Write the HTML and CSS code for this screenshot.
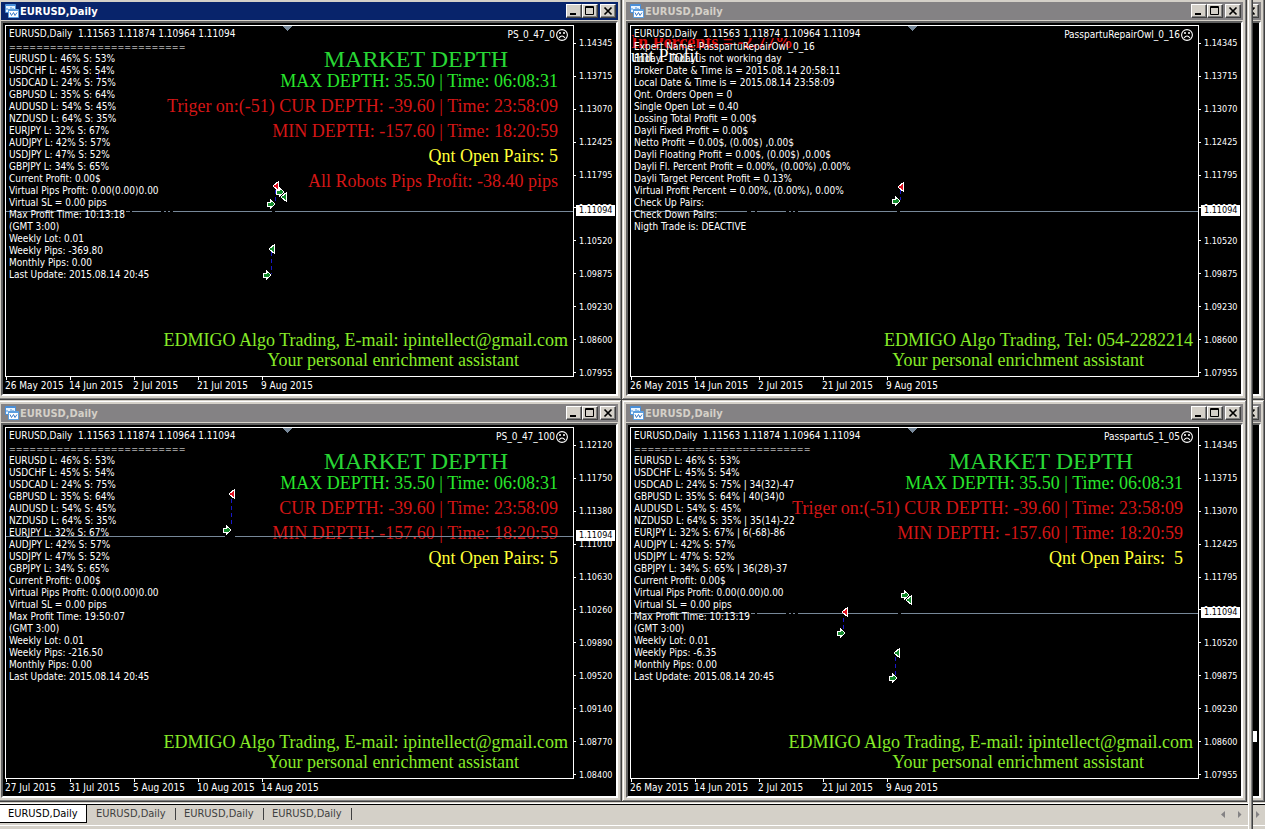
FILE: index.html
```html
<!DOCTYPE html>
<html lang="en">
<head>
<meta charset="utf-8">
<title>EURUSD,Daily</title>
<link rel="stylesheet" href="styles.css">
</head>
<body>
<svg class="defs" aria-hidden="true">
  <symbol id="chart-icon" viewBox="0 0 14 14">
    <rect x="0" y="0" width="11" height="9" rx="1" fill="#4a8fd8"/>
    <rect x="1" y="2" width="9" height="6" fill="#e8f4ff"/>
    <path d="M2 6V4M4 7V5M6 5V3M8 6V4" stroke="#4a8fd8"/>
    <rect x="3" y="5" width="11" height="9" rx="1" fill="#5c9fe0"/>
    <rect x="4" y="7" width="9" height="6" fill="#fff"/>
    <path d="M5 8.500l1.500 3 2-3 1.500 3 2-3" stroke="#3c7cc8" fill="none"/>
  </symbol>
  <symbol id="min" viewBox="0 0 12 10"><path d="M2 8h6" stroke="#000" stroke-width="2"/></symbol>
  <symbol id="max" viewBox="0 0 12 10"><path d="M1.500 .5h8v8h-8zM1 1.500h9" stroke="#000" fill="none"/></symbol>
  <symbol id="close" viewBox="0 0 12 10"><path d="M2.500 1.500l7 7M9.500 1.500l-7 7" stroke="#000" stroke-width="1.700"/></symbol>
  <symbol id="sad" viewBox="0 0 12 12">
    <circle cx="6" cy="6" r="5.400" fill="none" stroke="#fff" stroke-width="1.100"/>
    <path d="M3 4h2M7 4h2M4 3v2M8 3v2M3 9q3-4 6 0" stroke="#fff" stroke-width="1.100" fill="none"/>
  </symbol>
  <symbol id="buy" viewBox="-5 -5 10 10" overflow="visible"><path d="M-4-2h3v-2.500L4 0l-5 4.500V2h-3z" fill="#138a2c" stroke="#fff"/></symbol>
  <symbol id="exit" viewBox="-5 -5 10 10" overflow="visible"><path d="M-3 0L2.500-4.500v9z" fill="#138a2c" stroke="#fff"/></symbol>
  <symbol id="sell" viewBox="-5 -5 10 10" overflow="visible"><path d="M-3 0L2.500-4.500v9z" fill="#e01020" stroke="#fff"/></symbol>
</svg>

<main class="terminal">
  <div class="workspace">

    <section class="window active">
      <header class="titlebar">
        <svg class="icon"><use href="#chart-icon"/></svg><h2>EURUSD,Daily</h2>
        <button aria-label="Minimize"><svg><use href="#min"/></svg></button><button aria-label="Maximize"><svg><use href="#max"/></svg></button><button class="close" aria-label="Close"><svg><use href="#close"/></svg></button>
      </header>
      <div class="client">
        <div class="plot">
          <div class="depth">
            <p class="heading">MARKET DEPTH</p>
            <p class="green">MAX DEPTH: 35.50 | Time: 06:08:31</p>
            <p class="red">Triger on:(-51) CUR DEPTH: -39.60 | Time: 23:58:09</p>
            <p class="red">MIN DEPTH: -157.60 | Time: 18:20:59</p>
            <p class="yellow">Qnt Open Pairs: 5</p>
            <p class="red">All Robots Pips Profit: -38.40 pips</p>
          </div>
          <div class="credit"><p>EDMIGO Algo Trading, E-mail: ipintellect@gmail.com</p><p class="motto">Your personal enrichment assistant</p></div>
          <svg class="trades">
            <path class="shift" d="M276 0h11l-5.500 5z"/>
            <line class="price" x1="0" y1="185" x2="100%" y2="185"/>
            <path class="gap" d="M116 185h4M124 185h2M155 185h3M160 185h2M164 185h3M266 185h3"/>
            <path class="link" d="M269.500 164v14M265.500 226v22M92.500 48v5"/>
            <use href="#sell" x="265" y="155" width="10" height="10"/>
            <use href="#buy" x="269" y="161" width="10" height="10"/>
            <use href="#exit" x="273" y="166" width="10" height="10"/>
            <use href="#buy" x="260" y="173" width="10" height="10"/>
            <use href="#exit" x="261" y="218" width="10" height="10"/>
            <use href="#buy" x="256" y="244" width="10" height="10"/>
          </svg>
          <div class="info">
            <div class="quote"><span>EURUSD,Daily&nbsp; 1.11563 1.11874 1.10964 1.11094</span><span class="expert">PS_0_47_0 <svg><use href="#sad"/></svg></span></div>
            <ul>
              <li class="rule">==========================</li>
              <li>EURUSD L: 46% S: 53%</li><li>USDCHF L: 45% S: 54%</li><li>USDCAD L: 24% S: 75%</li><li>GBPUSD L: 35% S: 64%</li><li>AUDUSD L: 54% S: 45%</li><li>NZDUSD L: 64% S: 35%</li><li>EURJPY L: 32% S: 67%</li><li>AUDJPY L: 42% S: 57%</li><li>USDJPY L: 47% S: 52%</li><li>GBPJPY L: 34% S: 65%</li>
              <li>Current Profit: 0.00$</li><li>Virtual Pips Profit: 0.00(0.00)0.00</li><li>Virtual SL = 0.00 pips</li><li>Max Profit Time: 10:13:18</li><li>(GMT 3:00)</li><li>Weekly Lot: 0.01</li><li>Weekly Pips: -369.80</li><li>Monthly Pips: 0.00</li><li>Last Update: 2015.08.14 20:45</li>
            </ul>
          </div>
        </div>
        <div class="dates"><span>26 May 2015</span><span>14 Jun 2015</span><span>2 Jul 2015</span><span>21 Jul 2015</span><span>9 Aug 2015</span></div>
        <div class="axis"><span>1.14345</span><span>1.13715</span><span>1.13070</span><span>1.12425</span><span>1.11795</span><span>1.11150</span><span>1.10520</span><span>1.09875</span><span>1.09230</span><span>1.08600</span><span>1.07955</span><b style="top:180px">1.11094</b></div>
      </div>
    </section>

    <section class="window">
      <header class="titlebar">
        <svg class="icon"><use href="#chart-icon"/></svg><h2>EURUSD,Daily</h2>
        <button aria-label="Minimize"><svg><use href="#min"/></svg></button><button aria-label="Maximize"><svg><use href="#max"/></svg></button><button class="close" aria-label="Close"><svg><use href="#close"/></svg></button>
      </header>
      <div class="client">
        <div class="plot">
          <p class="stray percents">In Percents = -2.77%</p>
          <p class="stray amount">unt Profit</p>
          <div class="credit"><p>EDMIGO Algo Trading, Tel: 054-2282214</p><p class="motto">Your personal enrichment assistant</p></div>
          <svg class="trades">
            <path class="shift" d="M276 0h11l-5.500 5z"/>
            <line class="price" x1="0" y1="185" x2="100%" y2="185"/>
            <path class="gap" d="M116 185h4M124 185h2M155 185h3M160 185h2M164 185h3M266 185h3"/>
            <path class="link" d="M269.500 164v10"/>
            <use href="#sell" x="265" y="156" width="10" height="10"/>
            <use href="#buy" x="260" y="170" width="10" height="10"/>
          </svg>
          <div class="info">
            <div class="quote"><span class="solid">EURUSD,Daily&nbsp; 1.11563 1.11874 1.10964 1.11094</span><span class="expert">PasspartuRepairOwl_0_16 <svg><use href="#sad"/></svg></span></div>
            <ul>
              <li>Expert Name: PasspartuRepairOwl_0_16</li><li>Friday - Today is not working day</li><li>Broker Date &amp; Time is = 2015.08.14 20:58:11</li><li>Local Date &amp; Time is = 2015.08.14 23:58:09</li><li>Qnt. Orders Open = 0</li><li>Single Open Lot = 0.40</li><li>Lossing Total Profit = 0.00$</li><li>Dayli Fixed Profit = 0.00$</li><li>Netto Profit = 0.00$, (0.00$) ,0.00$</li><li>Dayli Floating Profit = 0.00$, (0.00$) ,0.00$</li><li>Dayli Fl. Percent Profit = 0.00%, (0.00%) ,0.00%</li><li>Dayli Target Percent Profit = 0.13%</li><li>Virtual Profit Percent = 0.00%, (0.00%), 0.00%</li><li>Check Up Pairs:</li><li>Check Down Pairs:</li><li>Nigth Trade is: DEACTIVE</li>
            </ul>
          </div>
        </div>
        <div class="dates"><span>26 May 2015</span><span>14 Jun 2015</span><span>2 Jul 2015</span><span>21 Jul 2015</span><span>9 Aug 2015</span></div>
        <div class="axis"><span>1.14345</span><span>1.13715</span><span>1.13070</span><span>1.12425</span><span>1.11795</span><span>1.11150</span><span>1.10520</span><span>1.09875</span><span>1.09230</span><span>1.08600</span><span>1.07955</span><b style="top:180px">1.11094</b></div>
      </div>
    </section>

    <section class="window">
      <header class="titlebar">
        <svg class="icon"><use href="#chart-icon"/></svg><h2>EURUSD,Daily</h2>
        <button aria-label="Minimize"><svg><use href="#min"/></svg></button><button aria-label="Maximize"><svg><use href="#max"/></svg></button><button class="close" aria-label="Close"><svg><use href="#close"/></svg></button>
      </header>
      <div class="client">
        <div class="plot">
          <div class="depth">
            <p class="heading">MARKET DEPTH</p>
            <p class="green">MAX DEPTH: 35.50 | Time: 06:08:31</p>
            <p class="red">CUR DEPTH: -39.60 | Time: 23:58:09</p>
            <p class="red">MIN DEPTH: -157.60 | Time: 18:20:59</p>
            <p class="yellow">Qnt Open Pairs: 5</p>
          </div>
          <div class="credit"><p>EDMIGO Algo Trading, E-mail: ipintellect@gmail.com</p><p class="motto">Your personal enrichment assistant</p></div>
          <svg class="trades">
            <path class="shift" d="M276 0h11l-5.500 5z"/>
            <line class="price" x1="0" y1="108" x2="100%" y2="108"/>
            <path class="gap" d="M219 108h10"/>
            <path class="link" d="M225.500 71v28"/>
            <use href="#sell" x="221" y="61" width="10" height="10"/>
            <use href="#buy" x="216" y="97" width="10" height="10"/>
          </svg>
          <div class="info">
            <div class="quote"><span>EURUSD,Daily&nbsp; 1.11563 1.11874 1.10964 1.11094</span><span class="expert">PS_0_47_100 <svg><use href="#sad"/></svg></span></div>
            <ul>
              <li class="rule">==========================</li>
              <li>EURUSD L: 46% S: 53%</li><li>USDCHF L: 45% S: 54%</li><li>USDCAD L: 24% S: 75%</li><li>GBPUSD L: 35% S: 64%</li><li>AUDUSD L: 54% S: 45%</li><li>NZDUSD L: 64% S: 35%</li><li>EURJPY L: 32% S: 67%</li><li>AUDJPY L: 42% S: 57%</li><li>USDJPY L: 47% S: 52%</li><li>GBPJPY L: 34% S: 65%</li>
              <li>Current Profit: 0.00$</li><li>Virtual Pips Profit: 0.00(0.00)0.00</li><li>Virtual SL = 0.00 pips</li><li>Max Profit Time: 19:50:07</li><li>(GMT 3:00)</li><li>Weekly Lot: 0.01</li><li>Weekly Pips: -216.50</li><li>Monthly Pips: 0.00</li><li>Last Update: 2015.08.14 20:45</li>
            </ul>
          </div>
        </div>
        <div class="dates"><span>27 Jul 2015</span><span>31 Jul 2015</span><span>5 Aug 2015</span><span>10 Aug 2015</span><span>14 Aug 2015</span></div>
        <div class="axis"><span>1.12120</span><span>1.11750</span><span>1.11380</span><span>1.11010</span><span>1.10630</span><span>1.10260</span><span>1.09890</span><span>1.09520</span><span>1.09140</span><span>1.08770</span><span>1.08400</span><b style="top:103px">1.11094</b></div>
      </div>
    </section>

    <section class="window">
      <header class="titlebar">
        <svg class="icon"><use href="#chart-icon"/></svg><h2>EURUSD,Daily</h2>
        <button aria-label="Minimize"><svg><use href="#min"/></svg></button><button aria-label="Maximize"><svg><use href="#max"/></svg></button><button class="close" aria-label="Close"><svg><use href="#close"/></svg></button>
      </header>
      <div class="client">
        <div class="plot">
          <div class="depth">
            <p class="heading">MARKET DEPTH</p>
            <p class="green">MAX DEPTH: 35.50 | Time: 06:08:31</p>
            <p class="red">Triger on:(-51) CUR DEPTH: -39.60 | Time: 23:58:09</p>
            <p class="red">MIN DEPTH: -157.60 | Time: 18:20:59</p>
            <p class="yellow">Qnt Open Pairs:&nbsp; 5</p>
          </div>
          <div class="credit"><p>EDMIGO Algo Trading, E-mail: ipintellect@gmail.com</p><p class="motto">Your personal enrichment assistant</p></div>
          <svg class="trades">
            <path class="shift" d="M276 0h11l-5.500 5z"/>
            <line class="price" x1="0" y1="185" x2="100%" y2="185"/>
            <path class="gap" d="M116 185h4M124 185h2M155 185h3M160 185h2M164 185h3M267 185h3"/>
            <path class="link" d="M212.500 190v14M264.500 229v20"/>
            <use href="#sell" x="209" y="179" width="10" height="10"/>
            <use href="#buy" x="205" y="200" width="10" height="10"/>
            <use href="#buy" x="269" y="162" width="10" height="10"/>
            <use href="#exit" x="273" y="167" width="10" height="10"/>
            <use href="#exit" x="261" y="220" width="10" height="10"/>
            <use href="#buy" x="257" y="245" width="10" height="10"/>
          </svg>
          <div class="info">
            <div class="quote"><span>EURUSD,Daily&nbsp; 1.11563 1.11874 1.10964 1.11094</span><span class="expert">PasspartuS_1_05 <svg><use href="#sad"/></svg></span></div>
            <ul>
              <li class="rule">==========================</li>
              <li>EURUSD L: 46% S: 53%</li><li>USDCHF L: 45% S: 54%</li><li>USDCAD L: 24% S: 75% | 34(32)-47</li><li>GBPUSD L: 35% S: 64% | 40(34)0</li><li>AUDUSD L: 54% S: 45%</li><li>NZDUSD L: 64% S: 35% | 35(14)-22</li><li>EURJPY L: 32% S: 67% | 6(-68)-86</li><li>AUDJPY L: 42% S: 57%</li><li>USDJPY L: 47% S: 52%</li><li>GBPJPY L: 34% S: 65% | 36(28)-37</li>
              <li>Current Profit: 0.00$</li><li>Virtual Pips Profit: 0.00(0.00)0.00</li><li>Virtual SL = 0.00 pips</li><li>Max Profit Time: 10:13:19</li><li>(GMT 3:00)</li><li>Weekly Lot: 0.01</li><li>Weekly Pips: -6.35</li><li>Monthly Pips: 0.00</li><li>Last Update: 2015.08.14 20:45</li>
            </ul>
          </div>
        </div>
        <div class="dates"><span>26 May 2015</span><span>14 Jun 2015</span><span>2 Jul 2015</span><span>21 Jul 2015</span><span>9 Aug 2015</span></div>
        <div class="axis"><span>1.14345</span><span>1.13715</span><span>1.13070</span><span>1.12425</span><span>1.11795</span><span>1.11150</span><span>1.10520</span><span>1.09875</span><span>1.09230</span><span>1.08600</span><span>1.07955</span><b style="top:180px">1.11094</b></div>
      </div>
    </section>
  </div>

  <nav class="tabs" aria-label="Charts">
    <button class="tab current">EURUSD,Daily</button><button class="tab">EURUSD,Daily</button><button class="tab">EURUSD,Daily</button><button class="tab">EURUSD,Daily</button>
    <span class="scroll"><svg viewBox="0 0 20 8"><path d="M4 0v7L0 3.500zM17 0v7l3.500-3.500z"/></svg></span>
  </nav>
</main>

<aside class="behind">
  <div class="stack">
    <section class="window"><header class="titlebar"><button class="close" aria-label="Close"><svg><use href="#close"/></svg></button></header><div class="client"></div></section>
    <section class="window"><header class="titlebar"><button class="close" aria-label="Close"><svg><use href="#close"/></svg></button></header><div class="client"><i class="tag"></i></div></section>
  </div>
  <div class="tabs"><span class="scroll"><svg viewBox="0 0 4 8"><path d="M0 0v7l3.500-3.500z"/></svg></span></div>
</aside>
</body>
</html>
```
FILE: styles.css
```css
* { box-sizing: border-box; }
body {
  margin: 0;
  padding-right: 9px;
  min-height: 100vh;
  display: flex;
  background: #fff;
  color: #fff;
  font: 10px/12px "DejaVu Sans Condensed", "Noto Sans", sans-serif;
}
h2, p, ul { margin: 0; padding: 0; font-weight: normal; }
ul { list-style: none; }
.defs { position: absolute; width: 0; height: 0; }

.terminal {
  flex: 1;
  min-width: 0;
  display: flex;
  flex-direction: column;
  overflow: hidden;
  background: #d4d0c8;
  border-right: 1px solid #404040;
  box-shadow: inset -1px 0 #808080, inset -3px 0 #d4d0c8, inset -4px 0 #fff;
}
.workspace {
  flex: 1;
  display: grid;
  grid-template: 1fr 1fr / 1fr 1fr;
  margin: -2px 5px 0 -3px;
}
.window {
  min-width: 0;
  display: flex;
  flex-direction: column;
  padding: 4px;
  background: #d4d0c8;
  box-shadow: inset -1px -1px #404040, inset 1px 1px #d4d0c8, inset -2px -2px #808080, inset 2px 2px #fff;
}
.titlebar {
  flex: none;
  display: flex;
  align-items: center;
  height: 18px;
  margin-bottom: 1px;
  padding: 0 2px 0 4px;
  background: #848284;
  color: #d4d0c8;
}
.active .titlebar { background: #08246b; color: #fff; }
.titlebar .icon { width: 14px; height: 14px; margin-right: 1px; }
.titlebar h2 { flex: 1; padding-top: 1px; font-size: 11px; line-height: 17px; font-weight: bold; }
.titlebar button {
  flex: none;
  width: 16px;
  height: 14px;
  padding: 1px;
  border: 1px solid;
  border-color: #fff #404040 #404040 #fff;
  background: #d4d0c8;
  box-shadow: inset -1px -1px #808080;
  line-height: 0;
}
.titlebar button.close { margin-left: 2px; }
.titlebar button svg { display: block; width: 12px; height: 10px; }

.client {
  flex: 1;
  display: grid;
  grid-template: 1fr 17px / 1fr 42px;
  padding: 2px 0 0 2px;
  border: 2px solid;
  border-color: #606060 #fff #fff #606060;
  background: #000;
  position: relative;
}
.plot {
  position: relative;
  display: grid;
  border: 1px solid #fff;
  overflow: hidden;
}
.plot > * { grid-area: 1 / 1; }
.trades { position: absolute; width: 100%; height: 100%; shape-rendering: crispEdges; }
.shift, .trades .price { fill: #778899; stroke: #778899; }
.shift { stroke: none; }
.gap { stroke: #000; stroke-width: 2; }
.link { stroke: #1818c8; stroke-dasharray: 4 3; fill: none; }

.info { position: relative; padding: 2px 5px 2px 3px; white-space: nowrap; }
.quote { display: flex; justify-content: space-between; height: 13px; }
.solid { background: #000; height: 10px; }
.expert { display: flex; align-items: center; gap: 1px; }
.expert svg { width: 12px; height: 12px; }
.rule { font-size: 9px; }

.depth, .credit, .stray {
  font-family: "Liberation Serif", serif;
  font-size: 18px;
  white-space: nowrap;
  text-align: right;
}
.depth { padding: 24px 15px 0 0; line-height: 25px; }
.heading { padding-right: 50px; font-size: 24px; line-height: 19px; color: #28d735; }
.green { color: #28e62c; }
.red { color: #d41616; }
.yellow { color: #ffff38; }
.credit { align-self: end; padding: 0 5px 6px 0; line-height: 20px; color: #86ea28; }
.motto { padding-right: 49px; }
.stray { text-align: left; line-height: 20px; }
.percents { margin-top: 6px; color: #d80c0c; font-weight: bold; }
.amount { margin-top: 20px; }

.dates { grid-area: 2 / 1; display: flex; white-space: nowrap; line-height: 17px; }
.dates span { flex: none; width: 64px; background: linear-gradient(#fff, #fff) 1px 0 / 1px 3px no-repeat; }
.axis {
  grid-area: 1 / 2 / 3 / 3;
  display: flex;
  flex-direction: column;
  position: relative;
  padding: 2px 0 5px;
  font-size: 9px;
}
.axis span {
  flex: 1;
  display: flex;
  align-items: center;
  gap: 3px;
}
.axis span::before { content: ""; width: 2px; height: 1px; background: #fff; }
.axis b {
  position: absolute;
  left: 2px;
  right: 1px;
  padding-left: 3px;
  font-weight: normal;
  line-height: 11px;
  background: #fff;
  color: #000;
}

.tabs {
  flex: none;
  display: flex;
  align-items: flex-start;
  height: 26px;
  margin-top: 1px;
  border-top: 1px solid #fff;
  background: linear-gradient(#000, #000) 0 0 / 100% 1px no-repeat, linear-gradient(#fff, #fff) 0 21px / 100% 1px no-repeat, #d4d0c8;
}
.terminal .tabs { margin-right: 4px; }
.tab {
  width: 88px;
  height: 18px;
  margin-top: 1px;
  padding: 0 0 0 8px;
  border: 0;
  background: linear-gradient(#404040, #404040) 100% 3px / 1px 12px no-repeat;
  color: #404040;
  font: 11px/18px "DejaVu Sans Condensed", "Noto Sans", sans-serif;
  text-align: left;
}
.tab.current {
  width: 87px;
  margin-right: 1px;
  background: #fff;
  color: #000;
  border: solid #000;
  border-width: 0 1px 1px 0;
}
.scroll { margin: 7px 6px 0 auto; line-height: 0; }
.scroll svg { width: 22px; height: 8px; fill: #848284; overflow: visible; }

.behind {
  flex: none;
  width: 12px;
  display: flex;
  flex-direction: column;
  overflow: hidden;
  background: #d4d0c8;
}
.stack { flex: 1; display: grid; grid-template-rows: 1fr 1fr; margin: -2px 0 0 -8px; }
.behind .titlebar { justify-content: flex-end; overflow: hidden; padding-left: 0; }
.behind .client { display: block; }
.tag { position: absolute; left: 2px; bottom: 54px; width: 4px; height: 11px; background: #fff; }
.behind .scroll { margin: 7px auto 0 3px; }
.behind .scroll svg { width: 4px; }
```
